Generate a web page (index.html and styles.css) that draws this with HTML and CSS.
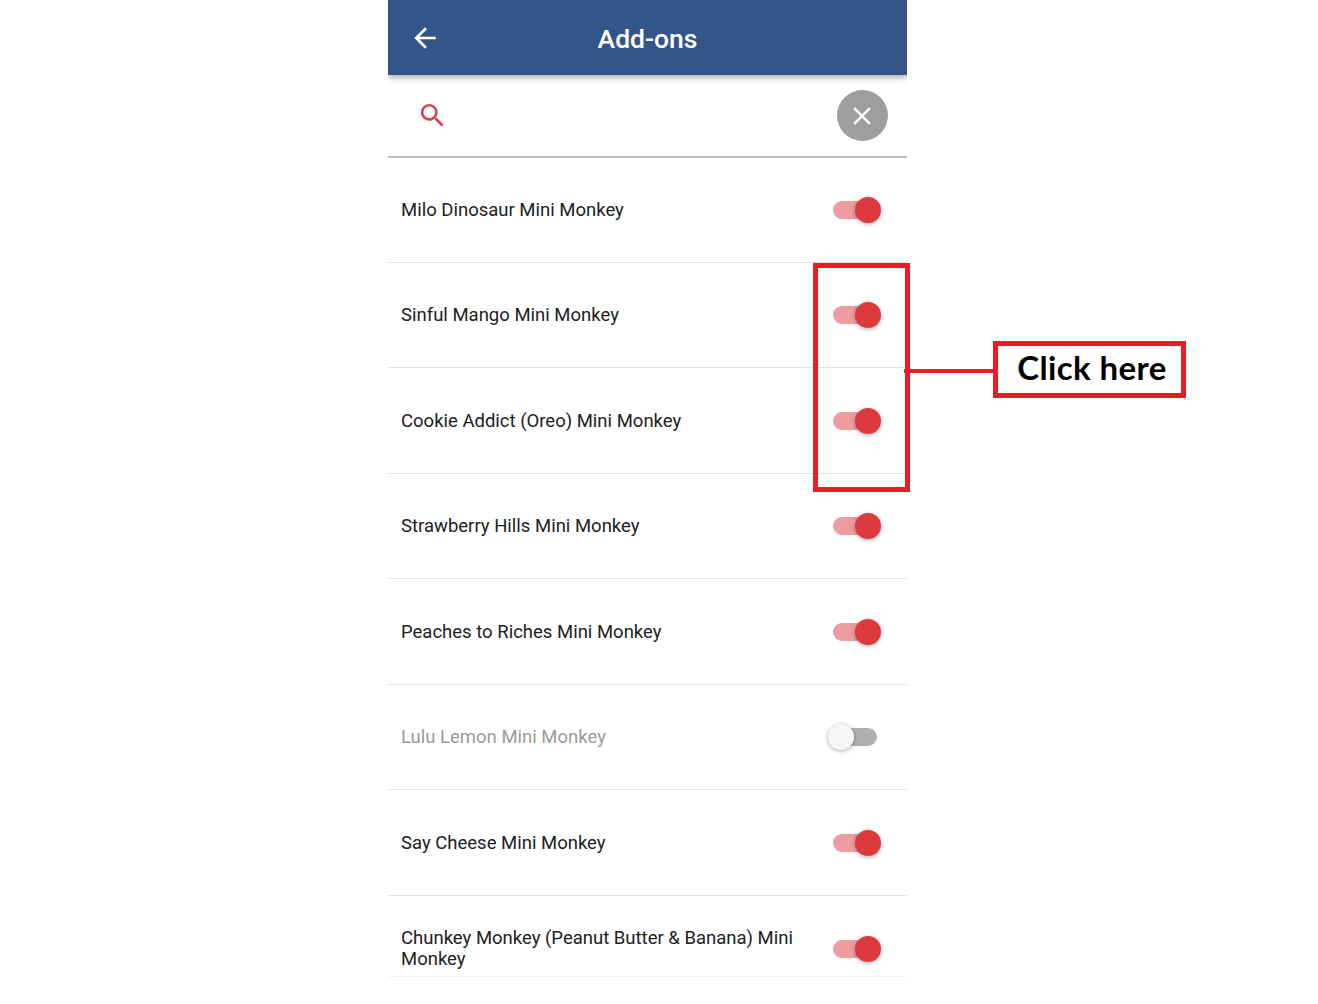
FILE: index.html
```html
<!DOCTYPE html>
<html lang="en">
<head>
    <meta charset="UTF-8">
    <title>Add-ons</title>
    <link rel="stylesheet" href="styles.css">
</head>
<body>
    <div class="phone">
        <header class="top-bar">
            <svg class="back-icon" viewBox="0 0 24 24"><path d="M20 11H7.83l5.59-5.59L12 4l-8 8 8 8 1.41-1.41L7.83 13H20v-2z"/></svg>
            <h1>Add-ons</h1>
        </header>

        <div class="search-bar">
            <svg class="search-icon" viewBox="0 0 24 24"><path d="M15.5 14h-.79l-.28-.27C15.41 12.59 16 11.11 16 9.5 16 5.91 13.09 3 9.5 3S3 5.91 3 9.5 5.91 16 9.5 16c1.61 0 3.09-.59 4.23-1.57l.27.28v.79l5 4.99L20.49 19l-4.99-5zm-6 0C7.01 14 5 11.99 5 9.5S7.01 5 9.5 5 14 7.01 14 9.5 11.99 14 9.5 14z"/></svg>
            <div class="clear-btn">
                <svg viewBox="0 0 24 24"><path d="M19 6.41L17.59 5 12 10.59 6.41 5 5 6.41 10.59 12 5 17.59 6.41 19 12 13.41 17.59 19 19 17.59 13.41 12z"/></svg>
            </div>
        </div>

        <ul class="addon-list">
            <li class="addon-row"><span class="addon-name">Milo Dinosaur Mini Monkey</span><span class="switch on"><i class="track"></i><i class="knob"></i></span></li>
            <li class="addon-row"><span class="addon-name">Sinful Mango Mini Monkey</span><span class="switch on"><i class="track"></i><i class="knob"></i></span></li>
            <li class="addon-row"><span class="addon-name">Cookie Addict (Oreo) Mini Monkey</span><span class="switch on"><i class="track"></i><i class="knob"></i></span></li>
            <li class="addon-row"><span class="addon-name">Strawberry Hills Mini Monkey</span><span class="switch on"><i class="track"></i><i class="knob"></i></span></li>
            <li class="addon-row"><span class="addon-name">Peaches to Riches Mini Monkey</span><span class="switch on"><i class="track"></i><i class="knob"></i></span></li>
            <li class="addon-row disabled"><span class="addon-name">Lulu Lemon Mini Monkey</span><span class="switch"><i class="track"></i><i class="knob"></i></span></li>
            <li class="addon-row"><span class="addon-name">Say Cheese Mini Monkey</span><span class="switch on"><i class="track"></i><i class="knob"></i></span></li>
            <li class="addon-row last"><span class="addon-name">Chunkey Monkey (Peanut Butter &amp; Banana) Mini Monkey</span><span class="switch on"><i class="track"></i><i class="knob"></i></span></li>
        </ul>
    </div>

    <div class="mark-box"></div>
    <div class="mark-line"></div>
    <div class="mark-label">Click here</div>
</body>
</html>
```

FILE: styles.css
```css
* {
    box-sizing: border-box;
    margin: 0;
    padding: 0;
}

body {
    background-color: #fff;
    font-family: Roboto, sans-serif;
    height: 1004px;
    overflow: hidden;
    position: relative;
}

.phone {
    width: 519px;
    height: 977px;
    margin-left: 388px;
    overflow: hidden;
    border-bottom: 1px solid #f3f3f3;
}

.top-bar {
    height: 75px;
    background-color: #345587;
    box-shadow: 0 3px 6px rgba(0,0,0,0.3);
    display: flex;
    align-items: center;
    position: relative;
    z-index: 1;
}

.back-icon {
    width: 32px;
    height: 32px;
    margin-left: 21px;
    fill: #fff;
}

.top-bar h1 {
    flex: 1;
    margin-right: 53px;
    padding-top: 2px;
    text-align: center;
    color: #fff;
    font-size: 26.5px;
    font-weight: 500;
}

.search-bar {
    height: 83px;
    display: flex;
    align-items: center;
    justify-content: space-between;
    padding: 0 19px 0 29px;
    border-bottom: 2px solid #bdbdbd;
}

.search-icon {
    width: 31px;
    height: 31px;
    fill: #d9434a;
}

.clear-btn {
    width: 51px;
    height: 51px;
    border-radius: 50%;
    background-color: #9e9e9e;
    display: flex;
    align-items: center;
    justify-content: center;
}

.clear-btn svg {
    width: 30px;
    height: 30px;
    margin-right: 1px;
    fill: #fff;
}

.addon-list {
    list-style: none;
    margin-top: -0.6px;
}

.addon-row {
    height: 105.5px;
    display: flex;
    align-items: center;
    justify-content: space-between;
    padding: 0 26px 0 13px;
    border-bottom: 1px solid #e2e2e2;
    color: #212121;
    font-size: 18.5px;
    line-height: 21px;
}

.addon-row.last {
    border-bottom: none;
}

.addon-row.disabled {
    color: #9a9a9a;
}

.addon-name {
    max-width: 410px;
    padding-top: 1px;
}

.switch {
    width: 53px;
    height: 26px;
    flex-shrink: 0;
    position: relative;
}

.track {
    position: absolute;
    top: 4px;
    right: 4px;
    width: 36px;
    height: 18px;
    border-radius: 9px;
    background-color: #b0b0b0;
}

.knob {
    position: absolute;
    top: 0;
    left: 0;
    width: 26px;
    height: 26px;
    border-radius: 50%;
    background-color: #f7f7f7;
    box-shadow: 0 1px 4px rgba(0,0,0,0.35);
}

.switch.on .track {
    left: 5px;
    right: auto;
    background-color: #ee9ca0;
}

.switch.on .knob {
    left: 27px;
    background-color: #dd3a3e;
}

.mark-box {
    position: absolute;
    left: 813px;
    top: 263px;
    width: 97px;
    height: 229px;
    border: 5px solid #ed1c24;
}

.mark-line {
    position: absolute;
    left: 904px;
    top: 369px;
    width: 90px;
    height: 4px;
    background-color: #ed1c24;
}

.mark-label {
    position: absolute;
    left: 993px;
    top: 341px;
    width: 193px;
    height: 57px;
    border: 5px solid #ed1c24;
    padding: 0 0 5px 5px;
    background-color: #fff;
    display: flex;
    align-items: center;
    justify-content: center;
    font-family: Lato, sans-serif;
    font-size: 33px;
    font-weight: 700;
    letter-spacing: 0.4px;
    color: #000;
}
```
